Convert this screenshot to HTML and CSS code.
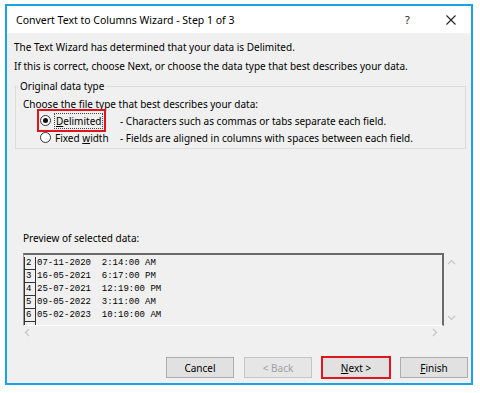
FILE: index.html
```html
<!DOCTYPE html>
<html lang="en">
<head>
  <meta charset="UTF-8">
  <title>Convert Text to Columns Wizard - Step 1 of 3</title>
  <link rel="stylesheet" href="styles.css">
</head>
<body>
  <div class="dialog">
    <!-- title bar -->
    <div class="titlebar">
      <span class="title">Convert Text to Columns Wizard - Step 1 of 3</span>
      <span class="help">?</span>
      <span class="close">
        <svg width="10" height="10" viewBox="0 0 10 10"><path d="M0.5 0.5 L9.5 9.5 M9.5 0.5 L0.5 9.5" stroke="#222" stroke-width="1.1" fill="none"/></svg>
      </span>
    </div>

    <div class="body">
      <p class="line first">The Text Wizard has determined that your data is Delimited.</p>
      <p class="line">If this is correct, choose Next, or choose the data type that best describes your data.</p>

      <!-- original data type group -->
      <fieldset class="group">
        <legend>Original data type</legend>
        <p class="group-caption">Choose the file type that best describes your data:</p>
        <div class="option">
          <span class="choice marked">
            <span class="radio checked"></span>
            <span class="choice-label focused"><u>D</u>elimited</span>
          </span>
          <span class="desc">- Characters such as commas or tabs separate each field.</span>
        </div>
        <div class="option">
          <span class="choice">
            <span class="radio"></span>
            <span class="choice-label">Fixed <u>w</u>idth</span>
          </span>
          <span class="desc">- Fields are aligned in columns with spaces between each field.</span>
        </div>
      </fieldset>

      <p class="preview-caption">Preview of selected data:</p>

      <div class="preview-area">
        <div class="preview">
          <div class="row"><span class="num">2</span><span class="data">07-11-2020  2:14:00 AM</span></div>
          <div class="row"><span class="num">3</span><span class="data">16-05-2021  6:17:00 PM</span></div>
          <div class="row"><span class="num">4</span><span class="data">25-07-2021  12:19:00 PM</span></div>
          <div class="row"><span class="num">5</span><span class="data">09-05-2022  3:11:00 AM</span></div>
          <div class="row"><span class="num">6</span><span class="data">05-02-2023  10:10:00 AM</span></div>
          <div class="row"><span class="num"></span><span class="data"></span></div>
        </div>
        <div class="vscroll">
          <svg width="9" height="6" viewBox="0 0 9 6"><path d="M1 5 L4.5 1.5 L8 5" stroke="#c4c4c4" stroke-width="1.2" fill="none"/></svg>
          <svg width="9" height="6" viewBox="0 0 9 6"><path d="M1 1 L4.5 4.5 L8 1" stroke="#c4c4c4" stroke-width="1.2" fill="none"/></svg>
        </div>
      </div>
      <div class="hscroll">
        <svg width="6" height="9" viewBox="0 0 6 9"><path d="M5 1 L1.5 4.5 L5 8" stroke="#c4c4c4" stroke-width="1.2" fill="none"/></svg>
        <svg width="6" height="9" viewBox="0 0 6 9"><path d="M1 1 L4.5 4.5 L1 8" stroke="#c4c4c4" stroke-width="1.2" fill="none"/></svg>
      </div>

      <!-- buttons -->
      <div class="buttons">
        <button class="btn">Cancel</button>
        <button class="btn" disabled>&lt; Back</button>
        <button class="btn marked"><u>N</u>ext &gt;</button>
        <button class="btn"><u>F</u>inish</button>
      </div>
    </div>
  </div>
</body>
</html>
```

FILE: styles.css
```css
/* page */
body {
  margin: 0;
  background: #fff;
  font-family: "Noto Sans", "Open Sans", sans-serif;
  font-size: 10px;
  color: #000;
}
.dialog {
  margin: 4px 0 0 5px;
  width: 464px;
  height: 377px;
  border: 2px solid #1aa3e9;
  background: #f0f0f0;
}
/* title bar */
.titlebar {
  height: 27px;
  background: #fff;
  display: flex;
  align-items: center;
  padding-left: 9px;
}
.title {
  font-size: 10.5px;
  flex: 1;
  color: #000;
}
.help {
  font-size: 11px;
  width: 10px;
  margin-right: 31px;
  color: #222;
}
.close {
  display: flex;
  width: 10px;
  margin-right: 15px;
}
/* body */
.body {
  padding-left: 7px;
}
.line {
  margin: 0;
  line-height: 19px;
}
.line.first {
  margin-top: 5px;
}
.group {
  margin: 3px 5px 0 1px;
  padding: 0 0 2px 0;
  border: 1px solid #dcdcdc;
}
.group legend {
  margin-left: 2px;
  padding: 0 2px;
  line-height: 14px;
}
.group-caption {
  margin: 3px 0 0 7px;
  line-height: 16px;
}
.option {
  display: flex;
  align-items: center;
  height: 17px;
}
.choice {
  display: flex;
  align-items: center;
  width: 80px;
  margin-left: 24px;
  height: 17px;
}
.choice.marked {
  outline: 2px solid #e3141b;
  outline-offset: 1px;
  width: 63px;
  margin-right: 17px;
}
.radio {
  width: 9px;
  height: 9px;
  border: 1px solid #333;
  border-radius: 50%;
  background: #fff;
  margin-right: 4px;
  position: relative;
}
.radio.checked::after {
  content: "";
  position: absolute;
  left: 2px;
  top: 2px;
  width: 5px;
  height: 5px;
  border-radius: 50%;
  background: #111;
}
.choice-label.focused {
  outline: 1px dotted #444;
  padding: 0 1px;
}
.preview-caption {
  margin: 81px 0 0 9px;
  line-height: 16px;
}
/* preview box */
.preview-area {
  display: flex;
  margin: 7px 0 0 9px;
}
.preview {
  width: 418px;
  border-top: 2px solid #6a6a6a;
  border-right: 2px solid #6a6a6a;
  border-left: 1px solid #9a9a9a;
  border-bottom: 1px solid #fff;
  padding-top: 2px;
  overflow: hidden;
  height: 68px;
}
.row {
  display: flex;
  height: 13px;
  font-family: "Liberation Mono", "Courier New", monospace;
  font-size: 9px;
  line-height: 13px;
  white-space: pre;
}
.num {
  width: 9px;
  padding-left: 1px;
  border-left: 1px solid #333;
  border-right: 1px solid #333;
  border-bottom: 1px solid #333;
  height: 12px;
  line-height: 12px;
}
.data {
  padding-left: 1px;
}
.vscroll {
  width: 13px;
  display: flex;
  flex-direction: column;
  justify-content: space-between;
  align-items: center;
  padding: 6px 0 5px;
  margin-left: 1px;
}
.hscroll {
  display: flex;
  justify-content: space-between;
  width: 414px;
  margin-left: 10px;
  height: 12px;
  align-items: center;
}
/* buttons */
.buttons {
  display: flex;
  justify-content: flex-end;
  gap: 10px;
  margin-top: 19px;
  padding-right: 3px;
}
.btn {
  width: 68px;
  height: 21px;
  background: #e1e1e1;
  border: 1px solid #adadad;
  font-family: inherit;
  font-size: 10px;
  color: #000;
  padding: 0;
}
.btn:disabled {
  color: #a0a0a0;
  border-color: #c6c6c6;
  background: #e6e6e6;
}
.btn.marked {
  outline: 2px solid #e3141b;
  outline-offset: -1px;
}
```
